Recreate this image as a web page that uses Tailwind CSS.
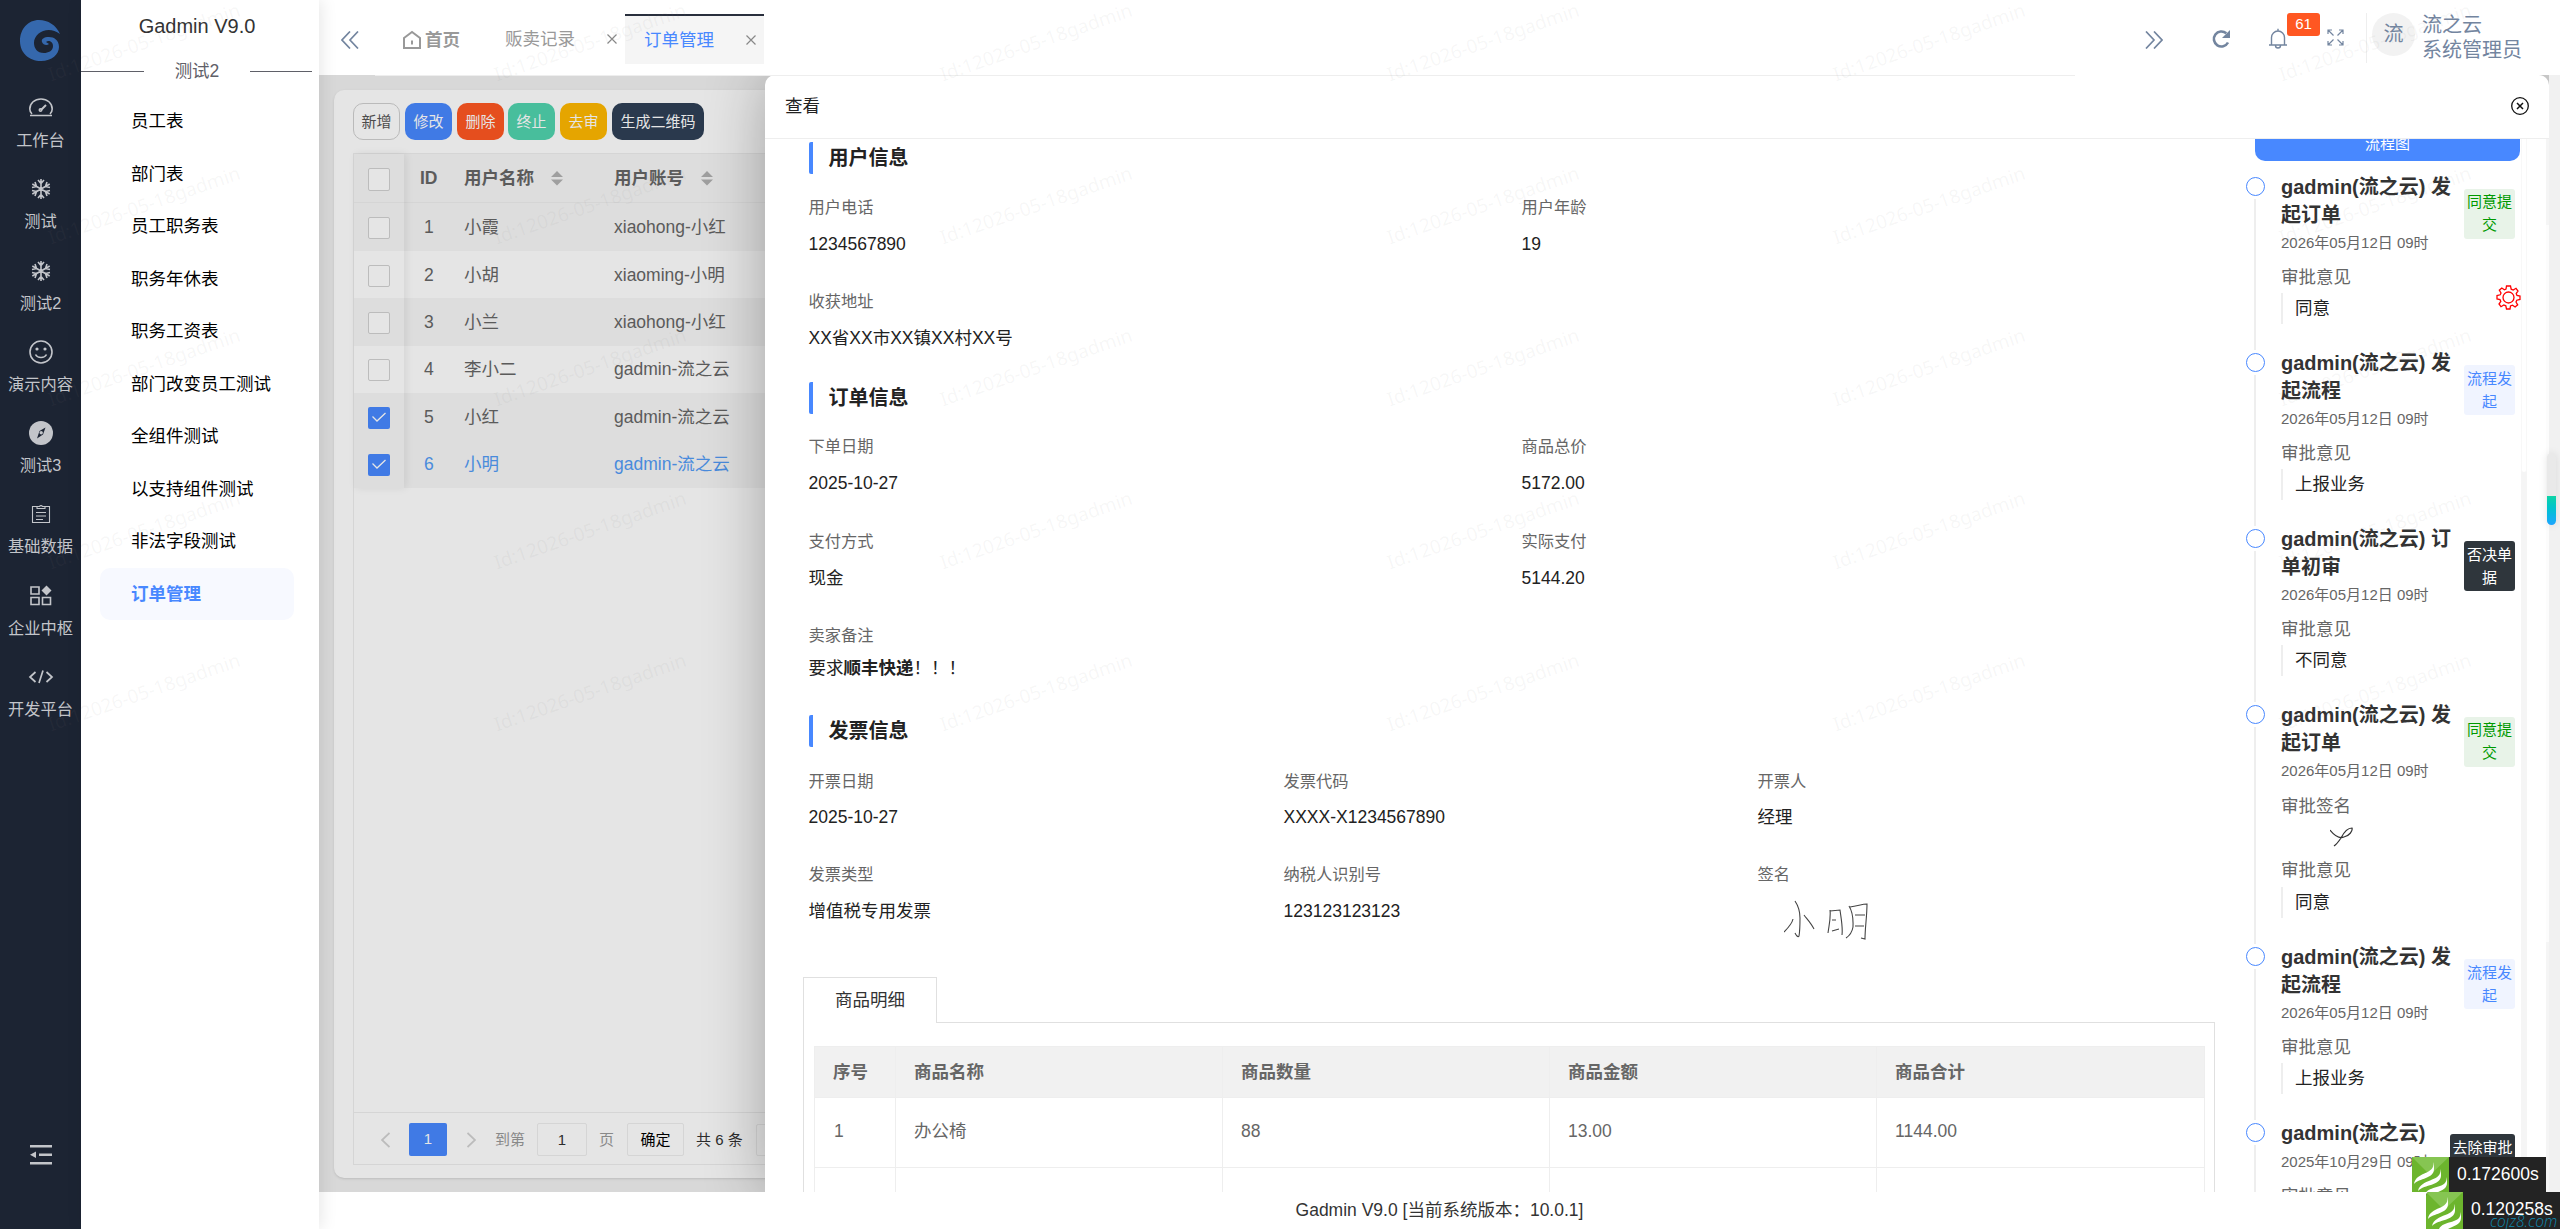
<!DOCTYPE html>
<html lang="zh-CN">
<head>
  <meta charset="UTF-8" />
  <meta name="viewport" content="width=device-width, initial-scale=1.0" />
  <title>Gadmin V9.0 - 订单管理</title>
  <script src="https://cdn.jsdelivr.net/npm/@tailwindcss/browser@4"></script>
</head>
<body class="relative flex h-[1229px] w-[2560px] overflow-hidden bg-white font-['Liberation_Sans','Noto_Sans_CJK_SC',sans-serif] text-[17.5px] leading-[26px] text-[#666]">

  <!-- 一级导航 -->
  <aside class="flex w-[81px] shrink-0 flex-col items-center bg-[#1c2433] pt-5 text-[16.25px] leading-6 text-[#c3c5ca]">
    <svg class="h-[42px] w-[42px] shrink-0" viewBox="0 0 42 42"><path fill="#3568ad" d="M40 14C36 5 28 0 19 0 8 0 0 9 0 21s9 20 21 20c11 0 18-7 18-14s-5-10-10-10-8 2-7 5 5 4 7 2c-1-1-2-1-3-2 2-2 7-1 7 4s-5 7-9 7c-7 0-10-5-10-10C14 13 28 5 40 14z"/></svg>
    <nav class="mt-[32px] flex flex-col">
      <div class="flex h-[81.25px] flex-col items-center gap-[6px]">
        <svg class="h-7 w-7" viewBox="0 0 28 28" fill="none" stroke="currentColor" stroke-width="1.6"><path d="M3 21.500h22M5 20C3.300 18.500 2.800 17 2.800 15 2.800 9 7.800 5 14 5S25.200 9 25.200 15c0 2-.5 3.500-2.200 5"/><path d="M14 16l5-5" stroke-width="2"/><circle cx="13.500" cy="16" r="1.200"/></svg>
        <span>工作台</span>
      </div>
      <div class="flex h-[81.25px] flex-col items-center gap-[6px]">
        <svg class="h-7 w-7" viewBox="0 0 28 28" fill="none" stroke="currentColor" stroke-width="1.6"><path d="M14 4v20M5.300 9l17.400 10M5.300 19L22.700 9M11 5l3 3.500L17 5M11 23l3-3.500 3 3.500M5 12.500l4.500-1L8 7M23 15.500l-4.500 1L20 21M5 15.500l4.500 1L8 21M23 12.500l-4.500-1L20 7"/></svg>
        <span>测试</span>
      </div>
      <div class="flex h-[81.25px] flex-col items-center gap-[6px]">
        <svg class="h-7 w-7" viewBox="0 0 28 28" fill="none" stroke="currentColor" stroke-width="1.6"><path d="M14 4v20M5.300 9l17.400 10M5.300 19L22.700 9M11 5l3 3.500L17 5M11 23l3-3.500 3 3.500M5 12.500l4.500-1L8 7M23 15.500l-4.500 1L20 21M5 15.500l4.500 1L8 21M23 12.500l-4.500-1L20 7"/></svg>
        <span>测试2</span>
      </div>
      <div class="flex h-[81.25px] flex-col items-center gap-[6px]">
        <svg class="h-7 w-7" viewBox="0 0 28 28" fill="none" stroke="currentColor" stroke-width="1.6"><circle cx="14" cy="14" r="11"/><path d="M8.500 16.500c2 4 9 4 11 0"/><circle cx="10" cy="11" r=".8" fill="currentColor"/><circle cx="18" cy="11" r=".8" fill="currentColor"/></svg>
        <span>演示内容</span>
      </div>
      <div class="flex h-[81.25px] flex-col items-center gap-[6px]">
        <svg class="h-7 w-7" viewBox="0 0 28 28"><circle cx="14" cy="14" r="12" fill="currentColor"/><path d="M18.500 8.500l-2.500 7-6 4 2.500-7.500z" fill="#1c2433"/><circle cx="14.200" cy="13.800" r="1.700" fill="currentColor"/></svg>
        <span>测试3</span>
      </div>
      <div class="flex h-[81.25px] flex-col items-center gap-[6px]">
        <svg class="h-7 w-7" viewBox="0 0 28 28" fill="none" stroke="currentColor" stroke-width="1.1"><path d="M10 6.500H5.500v16h17v-16H18M10 8.500h8V6.500h-2.500a1.700 1.700 0 0 0-3 0H10zM9 12.500h10M9 16h10M9 19.500h7"/></svg>
        <span>基础数据</span>
      </div>
      <div class="flex h-[81.25px] flex-col items-center gap-[6px]">
        <svg class="h-7 w-7" viewBox="0 0 28 28" fill="none" stroke="currentColor" stroke-width="1.6"><path d="M4 5h8v7H4zM4 15.500h8v7H4zM15.500 15.500h8v7h-8z"/><path d="M19.500 3.500l5 5-5 5-5-5z" fill="currentColor" stroke="none"/></svg>
        <span>企业中枢</span>
      </div>
      <div class="flex h-[81.25px] flex-col items-center gap-[6px]">
        <svg class="h-7 w-7" viewBox="0 0 28 28" fill="none" stroke="currentColor" stroke-width="1.7"><path d="M8.500 9L3 14l5.500 5M19.500 9l5.500 5-5.500 5M16 7.500L12 20"/></svg>
        <span>开发平台</span>
      </div>
    </nav>
    <svg class="mt-auto mb-[64px] h-5 w-[22px]" viewBox="0 0 22 20"><path fill="currentColor" d="M0 0h22v2.500H0zM0 17h22v2.500H0zM9 8.500h13V11H9zM6 6.500v6.500L0 9.700z"/></svg>
  </aside>

  <!-- 二级菜单 -->
  <aside class="relative z-10 flex w-[238px] shrink-0 flex-col bg-white shadow-[2px_0_16px_rgba(0,0,0,0.1)]">
    <h1 class="mt-[13px] pr-[6px] text-center text-[20px] leading-[26px] text-[#333]">Gadmin V9.0</h1>
    <div class="mt-[19px] flex items-center justify-between pr-[7px]">
      <span class="h-px w-[63px] bg-[#5f6068]"></span>
      <span class="text-[#5f6068]">测试2</span>
      <span class="h-px w-[62px] bg-[#5f6068]"></span>
    </div>
    <ul class="mt-[11px] ml-[19px] w-[194px] text-black leading-[52.5px]">
      <li class="pl-[31px]">员工表</li>
      <li class="pl-[31px]">部门表</li>
      <li class="pl-[31px]">员工职务表</li>
      <li class="pl-[31px]">职务年休表</li>
      <li class="pl-[31px]">职务工资表</li>
      <li class="pl-[31px]">部门改变员工测试</li>
      <li class="pl-[31px]">全组件测试</li>
      <li class="pl-[31px]">以支持组件测试</li>
      <li class="pl-[31px]">非法字段测试</li>
      <li class="rounded-[10px] bg-[#f7f9ff] pl-[31px] font-bold text-[#4888ff]">订单管理</li>
    </ul>
  </aside>

  <div class="flex min-w-0 flex-1 flex-col">
    <!-- 顶部标签栏 -->
    <header class="flex h-[75px] shrink-0 items-start text-[#999]">
      <svg class="mt-[31px] ml-[22px] h-[18px] w-[18px]" viewBox="0 0 18 18" fill="none" stroke="#73859f" stroke-width="1.7"><path d="M9 .5L1 9l8 8.500M17 .5L9 9l8 8.500"/></svg>
      <div class="mt-[27px] ml-[43px] flex items-center gap-[3px] font-bold">
        <svg class="h-5 w-5" viewBox="0 0 20 20" fill="none" stroke="currentColor" stroke-width="2"><path d="M2 8l8-6 8 6v10H2zM10 10.500v4"/></svg>
        <span>首页</span>
      </div>
      <div class="mt-[26px] ml-[45px] flex items-center">
        <span>贩卖记录</span>
        <svg class="ml-[32px] h-[10px] w-[10px]" viewBox="0 0 10 10" stroke="#888" stroke-width="1.200"><path d="M.5.5l9 9M9.500.5l-9 9"/></svg>
      </div>
      <div class="mt-[14px] ml-[8px] flex h-[50px] w-[139px] items-center border-t-2 border-[#292f3d] bg-[#f5f5f5] pl-[19px] text-[#4888ff]">
        <span class="-mt-px">订单管理</span>
        <svg class="ml-[32px] h-[10px] w-[10px]" viewBox="0 0 10 10" stroke="#888" stroke-width="1.200"><path d="M.5.5l9 9M9.500.5l-9 9"/></svg>
      </div>

      <svg class="mt-[31px] ml-auto h-[18px] w-[18px]" viewBox="0 0 18 18" fill="none" stroke="#73859f" stroke-width="1.7"><path d="M1 .5L9 9l-8 8.500M9 .5L17 9l-8 8.500"/></svg>
      <svg class="mt-[29px] ml-[48px] h-5 w-5" viewBox="0 0 20 20" fill="none" stroke="#73859f" stroke-width="2.600"><path d="M17 13.500A7.500 7.500 0 1 1 15.300 4.300"/><path fill="#73859f" stroke="none" d="M19 1v8h-8z"/></svg>
      <div class="relative mt-[28px] ml-[37px]">
        <svg class="h-[21px] w-5" viewBox="0 0 20 21" fill="none" stroke="#73859f" stroke-width="1.400"><path d="M1 17h18M3.500 17V9.500a6.500 6.500 0 0 1 13 0V17M10 3V.8M7.500 17.500a2.500 2.500 0 0 0 5 0"/></svg>
        <span class="absolute -top-[15px] left-[19px] h-[23px] w-[33px] rounded-[3px] bg-[#ff5722] text-center text-[15px] leading-[22px] text-white">61</span>
      </div>
      <svg class="mt-[29px] ml-[39px] h-[17px] w-[17px]" viewBox="0 0 17 17" fill="none" stroke="#73859f" stroke-width="1.200"><path d="M1 5V1h4M12 1h4v4M16 12v4h-4M5 16H1v-4M1 1l5.500 5.500M16 1l-5.500 5.500M16 16l-5.500-5.500M1 16l5.500-5.500"/></svg>
      <span class="mt-[13px] ml-[22px] h-[50px] w-px bg-[#eee]"></span>
      <span class="mt-[13px] ml-[5px] h-[43px] w-[43px] rounded-full bg-[#f2f2f2] text-center text-[20px] leading-[42px] text-[#73859f]">流</span>
      <div class="mt-[13px] mr-[38px] ml-[7px] text-[20px] leading-[25px] text-[#73859f]">
        <div>流之云</div>
        <div>系统管理员</div>
      </div>
    </header>

    <!-- 内容区 -->
    <div class="relative h-[1117px] shrink-0 overflow-hidden bg-[#f1f1f1] p-[15px] pb-[14px]">
      <div class="flex h-full w-[1100px] flex-col rounded-[10px] bg-white px-[19px] pt-[13px] pb-[13px] shadow-sm">
        <div class="flex gap-[5px] text-[15px] leading-[38px] text-white">
          <button class="h-[37px] w-[47px] rounded-[10px] border border-[#d0d0d0] leading-[36px] text-[#555]">新增</button>
          <button class="h-[37px] w-[47px] rounded-[10px] bg-[#4888ff]">修改</button>
          <button class="h-[37px] w-[47px] rounded-[10px] bg-[#ff5722]">删除</button>
          <button class="-ml-px h-[37px] w-[47px] rounded-[10px] bg-[#51d4ae]">终止</button>
          <button class="h-[37px] w-[47px] rounded-[10px] bg-[#ffb800]">去审</button>
          <button class="h-[37px] w-[92px] rounded-[10px] bg-[#2f4056]">生成二维码</button>
        </div>

        <div class="mt-[13px] flex flex-1 flex-col border border-[#eee]">
          <div class="relative flex">
            <div class="flex-1">
              <div class="flex h-[49px] items-center border-b border-[#eee] bg-[#f6f6f6] font-bold">
                <div class="w-[110px] pl-[66px]">ID</div>
                <div class="flex w-[150px] items-center gap-[17px]">用户名称 <svg class="h-4 w-3" viewBox="0 0 12 16" fill="#b2b2b2"><path d="M6 1l6 6H0zM6 15.500l6-6H0z"/></svg></div>
                <div class="flex items-center gap-[17px]">用户账号 <svg class="h-4 w-3" viewBox="0 0 12 16" fill="#b2b2b2"><path d="M6 1l6 6H0zM6 15.500l6-6H0z"/></svg></div>
              </div>
              <div class="flex h-[48px] items-center bg-[#f6f6f6]"><div class="w-[110px] pl-[70px]">1</div><div class="w-[150px]">小霞</div><div>xiaohong-小红</div></div>
              <div class="flex h-[47.4px] items-center"><div class="w-[110px] pl-[70px]">2</div><div class="w-[150px]">小胡</div><div>xiaoming-小明</div></div>
              <div class="flex h-[47.4px] items-center bg-[#f6f6f6]"><div class="w-[110px] pl-[70px]">3</div><div class="w-[150px]">小兰</div><div>xiaohong-小红</div></div>
              <div class="flex h-[47.4px] items-center"><div class="w-[110px] pl-[70px]">4</div><div class="w-[150px]">李小二</div><div>gadmin-流之云</div></div>
              <div class="flex h-[47.4px] items-center bg-[#f6f6f6]"><div class="w-[110px] pl-[70px]">5</div><div class="w-[150px]">小红</div><div>gadmin-流之云</div></div>
              <div class="flex h-[47.4px] items-center bg-[#f6f6f6] text-[#529bf5]"><div class="w-[110px] pl-[70px]">6</div><div class="w-[150px]">小明</div><div>gadmin-流之云</div></div>
            </div>
            <!-- 固定的复选框列 -->
            <div class="absolute top-0 left-0 flex h-full w-[50px] flex-col items-center shadow-[2px_0_8px_rgba(0,0,0,0.08)]">
              <div class="flex h-[50px] items-center"><span class="h-[23px] w-[22px] rounded-[2px] border border-[#d2d2d2] bg-white"></span></div>
              <div class="flex h-[48px] items-center"><span class="h-[22px] w-[22px] rounded-[2px] border border-[#d2d2d2] bg-white"></span></div>
              <div class="flex h-[47.4px] items-center"><span class="h-[22px] w-[22px] rounded-[2px] border border-[#d2d2d2] bg-white"></span></div>
              <div class="flex h-[47.4px] items-center"><span class="h-[22px] w-[22px] rounded-[2px] border border-[#d2d2d2] bg-white"></span></div>
              <div class="flex h-[47.4px] items-center"><span class="h-[22px] w-[22px] rounded-[2px] border border-[#d2d2d2] bg-white"></span></div>
              <div class="flex h-[47.4px] items-center"><svg class="h-[22px] w-[22px] rounded-[2px] bg-[#4888ff]" viewBox="0 0 22 22" fill="none" stroke="#fff" stroke-width="1.300"><path d="M4.500 9.500l4.500 4.500 8.500-8"/></svg></div>
              <div class="flex h-[46.4px] items-center"><svg class="h-[22px] w-[22px] rounded-[2px] bg-[#4888ff]" viewBox="0 0 22 22" fill="none" stroke="#fff" stroke-width="1.300"><path d="M4.500 9.500l4.500 4.500 8.500-8"/></svg></div>
            </div>
          </div>
          <!-- 分页 -->
          <div class="mt-auto flex h-[52px] items-center border-t border-[#eee] pt-[2px] pl-[27px] text-[15px] text-[#999]">
            <svg class="h-4 w-[9px]" viewBox="0 0 9 16" fill="none" stroke="#d2d2d2" stroke-width="1.800"><path d="M8.500 1L1 8l7.500 7"/></svg>
            <span class="ml-[19px] h-[33px] w-[38px] rounded-[2px] bg-[#4888ff] text-center leading-[32px] text-white">1</span>
            <svg class="ml-[20px] h-4 w-[9px]" viewBox="0 0 9 16" fill="none" stroke="#d2d2d2" stroke-width="1.800"><path d="M.5 1L8 8l-7.500 7"/></svg>
            <span class="ml-[19px]">到第</span>
            <span class="ml-[12px] h-[33px] w-[50px] rounded-[2px] border border-[#eee] text-center leading-[32px] text-[#333]">1</span>
            <span class="ml-[12px]">页</span>
            <span class="ml-[13px] h-[33px] w-[57px] rounded-[2px] border border-[#eee] text-center leading-[32px] text-black">确定</span>
            <span class="ml-[12px] text-[#333]">共 6 条</span>
            <span class="ml-[13px] h-[32px] w-[100px] rounded-[2px] border border-[#eee]"></span>
          </div>
        </div>
      </div>

      <!-- 遮罩 -->
      <div class="absolute inset-0 bg-black/10"></div>

      <!-- 查看抽屉 -->
      <section class="absolute top-0 left-[446px] flex h-[1117px] w-[1784px] flex-col rounded-t-[10px] bg-white shadow-[1px_1px_62px_rgba(0,0,0,0.3)]">
        <div class="flex h-[64px] shrink-0 items-center justify-between border-b border-[#eee] pr-[20px] pl-5 text-[#222]">
          <h2 class="-mt-[2px]">查看</h2>
          <svg class="-mt-[2px] h-[18px] w-[18px]" viewBox="0 0 18 18" fill="none" stroke="#111" stroke-width="1.300"><circle cx="9" cy="9" r="8.300"/><path d="M6 6l6 6M12 6l-6 6" stroke-width="1.500"/></svg>
        </div>

        <div class="flex min-h-0 flex-1 overflow-hidden">
          <div class="w-[1451px] shrink-0 pt-[3px] pl-[38px]">
            <div class="pl-[5.500px] text-[#222]">
              <h3 class="h-[32px] rounded-[2px] border-l-4 border-[#4888ff] pl-4 text-[20px] leading-[33px] font-bold">用户信息</h3>
              <div class="mt-[20px] grid grid-cols-[713px_713px] leading-[26px]">
                <div class="h-[94px]"><div class="text-[16.25px] text-[#666]">用户电话</div><div class="mt-[11px]">1234567890</div></div>
                <div class="h-[94px]"><div class="text-[16.25px] text-[#666]">用户年龄</div><div class="mt-[11px]">19</div></div>
                <div class="h-[94px]"><div class="text-[16.25px] text-[#666]">收获地址</div><div class="mt-[11px]">XX省XX市XX镇XX村XX号</div></div>
              </div>

              <h3 class="h-[32px] rounded-[2px] border-l-4 border-[#4888ff] pl-4 text-[20px] leading-[33px] font-bold">订单信息</h3>
              <div class="mt-[19px] grid grid-cols-[713px_713px] leading-[26px]">
                <div class="h-[94.500px]"><div class="text-[16.25px] text-[#666]">下单日期</div><div class="mt-[11px]">2025-10-27</div></div>
                <div class="h-[94.500px]"><div class="text-[16.25px] text-[#666]">商品总价</div><div class="mt-[11px]">5172.00</div></div>
                <div class="h-[94.500px]"><div class="text-[16.25px] text-[#666]">支付方式</div><div class="mt-[11px]">现金</div></div>
                <div class="h-[94.500px]"><div class="text-[16.25px] text-[#666]">实际支付</div><div class="mt-[11px]">5144.20</div></div>
                <div class="h-[93px]"><div class="text-[16.25px] text-[#666]">卖家备注</div><div class="mt-[7px]">要求<b>顺丰快递</b>！！！</div></div>
              </div>

              <h3 class="h-[32px] rounded-[2px] border-l-4 border-[#4888ff] pl-4 text-[20px] leading-[33px] font-bold">发票信息</h3>
              <div class="mt-[21px] grid grid-cols-[475px_474px_475px] leading-[26px]">
                <div class="h-[93px]"><div class="text-[16.25px] text-[#666]">开票日期</div><div class="mt-[10px]">2025-10-27</div></div>
                <div class="h-[93px]"><div class="text-[16.25px] text-[#666]">发票代码</div><div class="mt-[10px]">XXXX-X1234567890</div></div>
                <div class="h-[93px]"><div class="text-[16.25px] text-[#666]">开票人</div><div class="mt-[10px]">经理</div></div>
                <div class="h-[116px]"><div class="text-[16.25px] text-[#666]">发票类型</div><div class="mt-[11px]">增值税专用发票</div></div>
                <div class="h-[116px]"><div class="text-[16.25px] text-[#666]">纳税人识别号</div><div class="mt-[11px]">123123123123</div></div>
                <div class="h-[116px]">
                  <div class="text-[16.25px] text-[#666]">签名</div>
                  <!-- 手写签名 -->
                  <svg class="mt-[13px] ml-[26px] h-[40px] w-[86px]" viewBox="0 0 86 40" fill="none" stroke="#444" stroke-width="1.100"><path d="M11 1c4 6 5 12 5 17 0 7 0 12-1 18-1 2-3-1-4-3M9 19c-1 5-5 9-9 13M20 15c3 4 7 8 10 14M46 10c1 8-1 15-2 23M46 11l10-1c1 8 3 17 2 25M48 20h4M48 31l7-2M66 7c8-1 12-3 17-3 0 12-2 24-2 35l-4-1M65 6c5 8 4 16 4 21-1 6-4 9-7 11M71 15h10M71 26h9"/></svg>
                </div>
              </div>
            </div>

            <!-- 商品明细 -->
            <div class="relative z-[1] h-[46px] w-[134px] border border-b-0 border-[#e0e0e0] bg-white text-center leading-[45px] text-[#333]">商品明细</div>
            <div class="-mt-px h-[200px] w-[1412px] border border-[#e0e0e0] px-[10px] pt-[23px]">
              <table class="w-[1390px] table-fixed border-collapse text-left">
                <colgroup><col class="w-[81px]"><col class="w-[327px]"><col class="w-[327px]"><col class="w-[327px]"><col class="w-[328px]"></colgroup>
                <tr class="h-[51px] bg-[#f1f1f1]">
                  <th class="border border-[#eee] pb-px pl-[18px]">序号</th><th class="border border-[#eee] pb-px pl-[18px]">商品名称</th><th class="border border-[#eee] pb-px pl-[18px]">商品数量</th><th class="border border-[#eee] pb-px pl-[18px]">商品金额</th><th class="border border-[#eee] pb-px pl-[18px]">商品合计</th>
                </tr>
                <tr class="h-[70px]">
                  <td class="border border-[#eee] pb-[3px] pl-[19px]">1</td><td class="border border-[#eee] pb-[3px] pl-[18px]">办公椅</td><td class="border border-[#eee] pb-[3px] pl-[18px]">88</td><td class="border border-[#eee] pb-[3px] pl-[18px]">13.00</td><td class="border border-[#eee] pb-[3px] pl-[18px]">1144.00</td>
                </tr>
                <tr class="h-[70px]">
                  <td class="border border-[#eee]"></td><td class="border border-[#eee]"></td><td class="border border-[#eee]"></td><td class="border border-[#eee]"></td><td class="border border-[#eee]"></td>
                </tr>
              </table>
            </div>
          </div>

          <!-- 审批流程 -->
          <div class="w-[304px] pl-[30px]">
            <div class="-mt-[12px] ml-[9px] h-[34px] w-[265px] rounded-[10px] bg-[#4888ff] text-center text-[15px] leading-[34px] text-white">流程图</div>
            <ul class="mt-[16px] -ml-px">
              <li class="flex h-[176px]">
                <div class="flex w-[20px] flex-col items-center gap-[3px]"><span class="h-[19px] w-[19px] shrink-0 rounded-full border-[1.5px] border-[#4888ff]"></span><span class="mb-[3px] w-[2px] flex-1 bg-[#eee]"></span></div>
                <div class="ml-[16px] w-[174px]">
                  <h4 class="-mt-[3px] text-[20px] leading-[27.500px] font-bold text-[#333]">gadmin(流之云) 发起订单</h4>
                  <div class="mt-[3px] text-[15px] leading-[22px]">2026年05月12日 09时</div>
                  <div class="mt-[10px]">审批意见</div>
                  <div class="mt-[3px] h-[31px] border-l-2 border-[#eee] pl-3 leading-[31px] text-[#222]">同意</div>
                </div>
                <span class="mt-[12px] ml-[9px] h-[50px] w-[51px] rounded-[3px] bg-[#e8f3e8] px-[3px] pt-px text-center text-[15px] leading-[23px] text-[#090]">同意提交</span>
              </li>
              <li class="flex h-[176px]">
                <div class="flex w-[20px] flex-col items-center gap-[3px]"><span class="h-[19px] w-[19px] shrink-0 rounded-full border-[1.5px] border-[#4888ff]"></span><span class="mb-[3px] w-[2px] flex-1 bg-[#eee]"></span></div>
                <div class="ml-[16px] w-[174px]">
                  <h4 class="-mt-[3px] text-[20px] leading-[27.500px] font-bold text-[#333]">gadmin(流之云) 发起流程</h4>
                  <div class="mt-[3px] text-[15px] leading-[22px]">2026年05月12日 09时</div>
                  <div class="mt-[10px]">审批意见</div>
                  <div class="mt-[3px] h-[31px] border-l-2 border-[#eee] pl-3 leading-[31px] text-[#222]">上报业务</div>
                </div>
                <span class="mt-[12px] ml-[9px] h-[50px] w-[51px] rounded-[3px] bg-[#f0f4ff] px-[3px] pt-[2px] text-center text-[15px] leading-[23px] text-[#4888ff]">流程发起</span>
              </li>
              <li class="flex h-[176px]">
                <div class="flex w-[20px] flex-col items-center gap-[3px]"><span class="h-[19px] w-[19px] shrink-0 rounded-full border-[1.5px] border-[#4888ff]"></span><span class="mb-[3px] w-[2px] flex-1 bg-[#eee]"></span></div>
                <div class="ml-[16px] w-[174px]">
                  <h4 class="-mt-[3px] text-[20px] leading-[27.500px] font-bold text-[#333]">gadmin(流之云) 订单初审</h4>
                  <div class="mt-[3px] text-[15px] leading-[22px]">2026年05月12日 09时</div>
                  <div class="mt-[10px]">审批意见</div>
                  <div class="mt-[3px] h-[31px] border-l-2 border-[#eee] pl-3 leading-[31px] text-[#222]">不同意</div>
                </div>
                <span class="mt-[12px] ml-[9px] h-[50px] w-[51px] rounded-[3px] bg-[#2f363c] px-[3px] pt-[2px] text-center text-[15px] leading-[23px] text-white">否决单据</span>
              </li>
              <li class="flex h-[242px]">
                <div class="flex w-[20px] flex-col items-center gap-[3px]"><span class="h-[19px] w-[19px] shrink-0 rounded-full border-[1.5px] border-[#4888ff]"></span><span class="mb-[3px] w-[2px] flex-1 bg-[#eee]"></span></div>
                <div class="ml-[16px] w-[174px]">
                  <h4 class="-mt-[3px] text-[20px] leading-[27.500px] font-bold text-[#333]">gadmin(流之云) 发起订单</h4>
                  <div class="mt-[3px] text-[15px] leading-[22px]">2026年05月12日 09时</div>
                  <div class="mt-[11px]">审批签名</div>
                  <svg class="mt-[8px] ml-[49px] h-[20px] w-[23px]" viewBox="0 0 23 20" fill="none" stroke="#333" stroke-width="1.200"><path d="M0 3c4 5 9 9 14 7 5-1 9-6 8-9-5 0-9 6-11 10-2 3-4 6-7 8"/></svg>
                  <div class="mt-[10px]">审批意见</div>
                  <div class="mt-[4px] h-[31px] border-l-2 border-[#eee] pl-3 leading-[31px] text-[#222]">同意</div>
                </div>
                <span class="mt-[12px] ml-[9px] h-[50px] w-[51px] rounded-[3px] bg-[#e8f3e8] px-[3px] pt-px text-center text-[15px] leading-[23px] text-[#090]">同意提交</span>
              </li>
              <li class="flex h-[176px]">
                <div class="flex w-[20px] flex-col items-center gap-[3px]"><span class="h-[19px] w-[19px] shrink-0 rounded-full border-[1.5px] border-[#4888ff]"></span><span class="mb-[3px] w-[2px] flex-1 bg-[#eee]"></span></div>
                <div class="ml-[16px] w-[174px]">
                  <h4 class="-mt-[3px] text-[20px] leading-[27.500px] font-bold text-[#333]">gadmin(流之云) 发起流程</h4>
                  <div class="mt-[3px] text-[15px] leading-[22px]">2026年05月12日 09时</div>
                  <div class="mt-[10px]">审批意见</div>
                  <div class="mt-[3px] h-[31px] border-l-2 border-[#eee] pl-3 leading-[31px] text-[#222]">上报业务</div>
                </div>
                <span class="mt-[12px] ml-[9px] h-[50px] w-[51px] rounded-[3px] bg-[#f0f4ff] px-[3px] pt-[2px] text-center text-[15px] leading-[23px] text-[#4888ff]">流程发起</span>
              </li>
              <li class="flex h-[176px]">
                <div class="flex w-[20px] flex-col items-center gap-[3px]"><span class="h-[19px] w-[19px] shrink-0 rounded-full border-[1.5px] border-[#4888ff]"></span><span class="mb-[3px] w-[2px] flex-1 bg-[#eee]"></span></div>
                <div class="ml-[16px] w-[160px]">
                  <h4 class="-mt-[3px] text-[20px] leading-[27.500px] font-bold text-[#333]">gadmin(流之云)</h4>
                  <div class="mt-[3px] text-[15px] leading-[22px] whitespace-nowrap">2025年10月29日 09时</div>
                  <div class="mt-[10px]">审批意见</div>
                </div>
                <span class="mt-[11px] ml-[9px] h-[28px] w-[65px] rounded-[3px] bg-[#2f363c] text-center text-[15px] leading-[27px] text-white">去除审批</span>
              </li>
            </ul>
          </div>
          <!-- 滚动条 -->
          <div class="ml-px h-full w-[6px] bg-[#f5f5f5]"><div class="h-[333px] rounded-b-[3px] border-x border-[#f8f8f8] bg-white"></div></div>
          <div class="ml-[19px] h-full w-[3px] bg-[#f5f5f5] pt-[86px]"><div class="h-[717px] bg-[#fcfcfc]"></div></div>
        </div>
      </section>
      <div class="absolute top-0 right-0 h-full w-[11px] bg-[#f1f1f1]"></div>
    </div>

    <footer class="relative z-[1] flex h-[37px] shrink-0 justify-center text-[#333]">
      <span class="pt-[5px]">Gadmin V9.0 [当前系统版本：10.0.1]</span>
    </footer>
  </div>

  <!-- 顶栏分隔线 -->
  <div class="absolute top-[75px] left-[375px] h-px w-[1700px] bg-[#eee]"></div>

  <!-- 悬浮设置 -->
  <svg class="absolute top-[285px] left-[2496px] h-[25px] w-[25px]" viewBox="0 0 25 25" fill="none" stroke="red" stroke-width="1.300"><circle cx="12.500" cy="12.500" r="5.500"/><path d="M10.500 1h4l.7 3.200 2 .8L20 3.300 22 6l-1.800 2.500.8 2 3 .5v3.500l-3.200.7-.8 1.800 1.700 2.800-2.600 2.200-2.600-1.800-2 .8-.5 3h-3.500l-.7-3.200-2-.8L5 21.700 3 19l1.800-2.500-.8-2-3-.5v-3.500l3.200-.7.8-1.800L3.300 5.200 5.800 3l2.600 1.800 1.600-.8z"/></svg>

  <!-- 侧边滚动进度 -->
  <div class="absolute top-[453px] left-[2547px] flex h-[72px] w-[9px] items-end rounded-[5px] bg-[#e9e9e9] shadow-[0_0_8px_rgba(0,0,0,0.1)]">
    <div class="h-[29px] w-full rounded-b-[5px] bg-linear-to-b from-[#10d3a5] to-[#1ea5ff]"></div>
  </div>

  <!-- 运行耗时 -->
  <div class="absolute top-[1157px] left-[2412px] flex h-[35px] w-[134px] overflow-hidden bg-[#232323] leading-[35px] text-white">
    <svg class="h-[37px] w-[37px] shrink-0" viewBox="0 0 37 37"><path fill="#6cb52d" d="M0 0h37v37H0z"/><path fill="#86c552" d="M0 0h37L18 18z"/><path fill="#fff" d="M21 5C24 18 4 14 2 27c5-6 20-5 20-15 0-3 0-5-1-7zM28 12C31 25 9 21 6 34c7-7 22-5 23-15 0-3 0-5-1-7zM34 20c3 12-17 8-21 17h9c5-3 13-4 13-11 0-2 0-4-1-6z"/></svg>
    <span class="pl-[8px]">0.172600s</span>
  </div>
  <div class="absolute top-[1192px] left-[2426px] flex h-[37px] w-[134px] overflow-hidden rounded-tl-[4px] bg-[#232323] leading-[35px] text-white">
    <svg class="h-[37px] w-[37px] shrink-0" viewBox="0 0 37 37"><path fill="#6cb52d" d="M0 0h37v37H0z"/><path fill="#86c552" d="M0 0h37L18 18z"/><path fill="#fff" d="M21 5C24 18 4 14 2 27c5-6 20-5 20-15 0-3 0-5-1-7zM28 12C31 25 9 21 6 34c7-7 22-5 23-15 0-3 0-5-1-7zM34 20c3 12-17 8-21 17h9c5-3 13-4 13-11 0-2 0-4-1-6z"/></svg>
    <span class="pl-[8px]">0.120258s</span>
  </div>
  <div class="absolute top-[1210px] left-[2490px] font-['Open_Sans',sans-serif] text-[15.500px] leading-[22px] font-light text-[#0f87ad] italic">cojz8.com</div>

  <!-- 水印 -->
  <div id="watermark" class="pointer-events-none absolute inset-0 z-20 overflow-hidden"></div>

  <script>
    // 平铺水印文字
    const layer = document.getElementById('watermark');
    for (let row = 0; row < 5; row++) {
      for (let col = 0; col < 6; col++) {
        const mark = document.createElement('div');
        mark.className = "absolute w-[220px] -rotate-[19deg] text-center font-['Noto_Sans'] text-[19px] leading-6 whitespace-nowrap text-[#808080]/7";
        mark.style.left = (34 + col * 446.2) + 'px';
        mark.style.top = (30 + row * 162.6) + 'px';
        mark.textContent = 'Id:12026-05-18gadmin';
        layer.appendChild(mark);
      }
    }
  </script>
</body>
</html>
